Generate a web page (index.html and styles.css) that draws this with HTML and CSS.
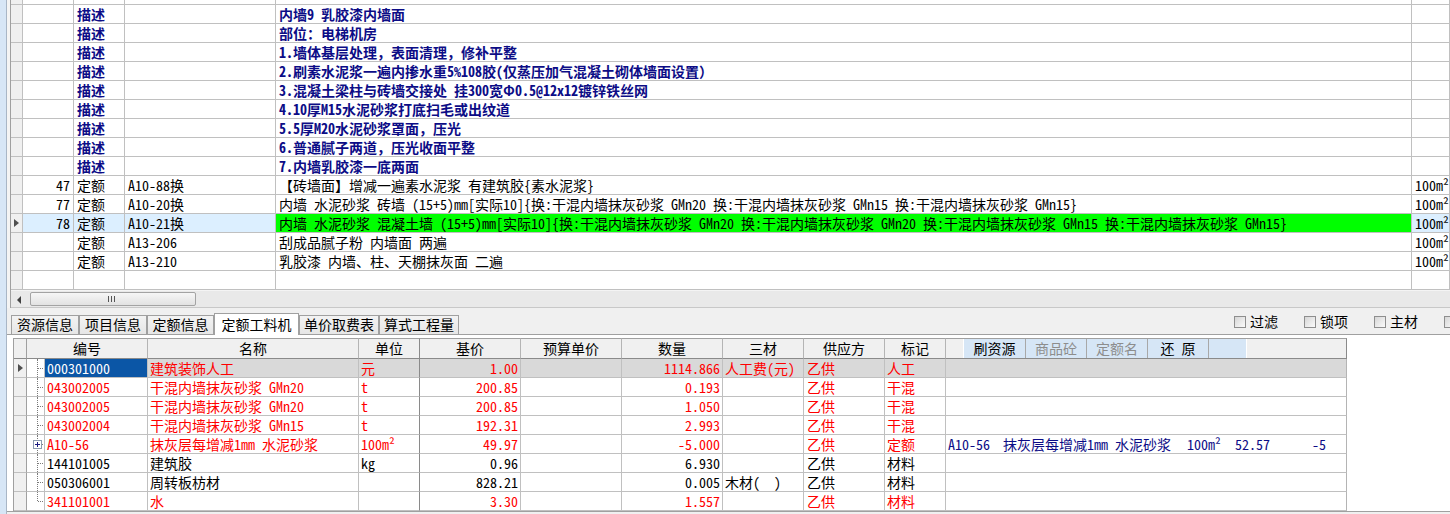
FILE: index.html
```html
<!DOCTYPE html>
<html lang="zh-CN">
<head>
<meta charset="utf-8">
<title>定额工料机</title>
<link rel="stylesheet" href="styles.css">
</head>
<body>
<div class="app">
  <div class="edge"></div>
  <div class="main">
    <section class="top">
      <div class="tframe">
        <div class="tgrid">
          <div class="trow stub"><div class="rh"></div><div></div><div></div><div></div><div></div><div></div></div>
          <div class="trow desc"><div class="rh"></div><div></div><div>描述</div><div></div><div>内墙9 乳胶漆内墙面</div><div></div></div>
          <div class="trow desc"><div class="rh"></div><div></div><div>描述</div><div></div><div>部位：电梯机房</div><div></div></div>
          <div class="trow desc"><div class="rh"></div><div></div><div>描述</div><div></div><div>1.墙体基层处理，表面清理，修补平整</div><div></div></div>
          <div class="trow desc"><div class="rh"></div><div></div><div>描述</div><div></div><div>2.刷素水泥浆一遍内掺水重5%108胶(仅蒸压加气混凝土砌体墙面设置）</div><div></div></div>
          <div class="trow desc"><div class="rh"></div><div></div><div>描述</div><div></div><div>3.混凝土梁柱与砖墙交接处 挂300宽Φ0.5@12x12镀锌铁丝网</div><div></div></div>
          <div class="trow desc"><div class="rh"></div><div></div><div>描述</div><div></div><div>4.10厚M15水泥砂浆打底扫毛或出纹道</div><div></div></div>
          <div class="trow desc"><div class="rh"></div><div></div><div>描述</div><div></div><div>5.5厚M20水泥砂浆罩面，压光</div><div></div></div>
          <div class="trow desc"><div class="rh"></div><div></div><div>描述</div><div></div><div>6.普通腻子两道，压光收面平整</div><div></div></div>
          <div class="trow desc"><div class="rh"></div><div></div><div>描述</div><div></div><div>7.内墙乳胶漆一底两面</div><div></div></div>
          <div class="trow"><div class="rh"></div><div class="num">47</div><div>定额</div><div>A10-88换</div><div>【砖墙面】增减一遍素水泥浆 有建筑胶{素水泥浆}</div><div>100m²</div></div>
          <div class="trow"><div class="rh"></div><div class="num">77</div><div>定额</div><div>A10-20换</div><div>内墙 水泥砂浆 砖墙 (15+5)mm[实际10]{换:干混内墙抹灰砂浆 GMn20 换:干混内墙抹灰砂浆 GMn15 换:干混内墙抹灰砂浆 GMn15}</div><div>100m²</div></div>
          <div class="trow cur"><div class="rh"><span class="tri"></span></div><div class="num">78</div><div>定额</div><div>A10-21换</div><div class="green">内墙 水泥砂浆 混凝土墙 (15+5)mm[实际10]{换:干混内墙抹灰砂浆 GMn20 换:干混内墙抹灰砂浆 GMn20 换:干混内墙抹灰砂浆 GMn15 换:干混内墙抹灰砂浆 GMn15}</div><div>100m²</div></div>
          <div class="trow"><div class="rh"></div><div class="num"></div><div>定额</div><div>A13-206</div><div>刮成品腻子粉 内墙面 两遍</div><div>100m²</div></div>
          <div class="trow"><div class="rh"></div><div class="num"></div><div>定额</div><div>A13-210</div><div>乳胶漆 内墙、柱、天棚抹灰面 二遍</div><div>100m²</div></div>
          <div class="trow"><div class="rh"></div><div></div><div></div><div></div><div></div><div></div></div>
        </div>
        <div class="hscroll">
          <span class="arrow-l"></span>
          <span class="thumb"><span class="grip"></span></span>
        </div>
      </div>
    </section>

    <section class="bottom">
      <div class="tabbar">
        <div class="tabs">
          <div class="tab">资源信息</div>
          <div class="tab">项目信息</div>
          <div class="tab">定额信息</div>
          <div class="tab active">定额工料机</div>
          <div class="tab">单价取费表</div>
          <div class="tab">算式工程量</div>
        </div>
        <div class="checks">
          <label class="chk"><span class="box"></span>过滤</label>
          <label class="chk"><span class="box"></span>锁项</label>
          <label class="chk"><span class="box"></span>主材</label>
          <label class="chk"><span class="box"></span></label>
        </div>
      </div>

      <div class="bwrap">
        <div class="bgrid">
          <div class="brow head">
            <div class="rh"></div>
            <div class="code-h">编号</div>
            <div>名称</div>
            <div class="dark">单位</div>
            <div>基价</div>
            <div>预算单价</div>
            <div>数量</div>
            <div>三材</div>
            <div>供应方</div>
            <div>标记</div>
            <div class="panel">
              <div class="toolbar">
                <span class="tb">刷资源</span><span class="tb dis">商品砼</span><span class="tb dis">定额名</span><span class="tb">还 原</span><span class="tb last"></span>
              </div>
            </div>
            <div class="rest"></div>
          </div>

          <div class="brow sel red">
            <div class="rh"><span class="tri"></span></div>
            <div class="tree"></div>
            <div class="code selcell">000301000</div>
            <div>建筑装饰人工</div>
            <div class="dark">元</div>
            <div class="r">1.00</div>
            <div></div>
            <div class="r">1114.866</div>
            <div>人工费(元)</div>
            <div class="sp">乙供</div>
            <div>人工</div>
            <div class="panel"></div>
            <div class="rest"></div>
          </div>

          <div class="brow red">
            <div class="rh"></div>
            <div class="tree"></div>
            <div class="code">043002005</div>
            <div>干混内墙抹灰砂浆 GMn20</div>
            <div class="dark">t</div>
            <div class="r">200.85</div>
            <div></div>
            <div class="r">0.193</div>
            <div></div>
            <div class="sp">乙供</div>
            <div>干混</div>
            <div class="panel"></div>
            <div class="rest"></div>
          </div>

          <div class="brow red">
            <div class="rh"></div>
            <div class="tree"></div>
            <div class="code">043002005</div>
            <div>干混内墙抹灰砂浆 GMn20</div>
            <div class="dark">t</div>
            <div class="r">200.85</div>
            <div></div>
            <div class="r">1.050</div>
            <div></div>
            <div class="sp">乙供</div>
            <div>干混</div>
            <div class="panel"></div>
            <div class="rest"></div>
          </div>

          <div class="brow red">
            <div class="rh"></div>
            <div class="tree"></div>
            <div class="code">043002004</div>
            <div>干混内墙抹灰砂浆 GMn15</div>
            <div class="dark">t</div>
            <div class="r">192.31</div>
            <div></div>
            <div class="r">2.993</div>
            <div></div>
            <div class="sp">乙供</div>
            <div>干混</div>
            <div class="panel"></div>
            <div class="rest"></div>
          </div>

          <div class="brow red">
            <div class="rh"></div>
            <div class="tree"><svg class="plus" width="9" height="9" viewBox="0 0 9 9"><rect x="0.5" y="0.5" width="8" height="8" fill="#fff" stroke="#8c9cb0"/><path d="M2 4.5h5M4.5 2v5" stroke="#1a1a80"/></svg></div>
            <div class="code">A10-56</div>
            <div>抹灰层每增减1mm 水泥砂浆</div>
            <div class="dark">100m²</div>
            <div class="r">49.97</div>
            <div></div>
            <div class="r">-5.000</div>
            <div></div>
            <div class="sp">乙供</div>
            <div>定额</div>
            <div class="panel info"><span class="p-code">A10-56</span><span class="p-name">抹灰层每增减1mm 水泥砂浆</span><span class="p-unit">100m²</span><span class="p-price">52.57</span><span class="p-qty">-5</span></div>
            <div class="rest"></div>
          </div>

          <div class="brow">
            <div class="rh"></div>
            <div class="tree"></div>
            <div class="code">144101005</div>
            <div>建筑胶</div>
            <div class="dark">kg</div>
            <div class="r">0.96</div>
            <div></div>
            <div class="r">6.930</div>
            <div></div>
            <div class="sp">乙供</div>
            <div>材料</div>
            <div class="panel"></div>
            <div class="rest"></div>
          </div>

          <div class="brow">
            <div class="rh"></div>
            <div class="tree"></div>
            <div class="code">050306001</div>
            <div>周转板枋材</div>
            <div class="dark"></div>
            <div class="r">828.21</div>
            <div></div>
            <div class="r">0.005</div>
            <div>木材(&nbsp;&nbsp;)</div>
            <div class="sp">乙供</div>
            <div>材料</div>
            <div class="panel"></div>
            <div class="rest"></div>
          </div>

          <div class="brow red">
            <div class="rh"></div>
            <div class="tree last"></div>
            <div class="code">341101001</div>
            <div>水</div>
            <div class="dark"></div>
            <div class="r">3.30</div>
            <div></div>
            <div class="r">1.557</div>
            <div></div>
            <div class="sp">乙供</div>
            <div>材料</div>
            <div class="panel"></div>
            <div class="rest"></div>
          </div>
        </div>
        <div class="bline"></div>
      </div>
    </section>
  </div>
</div>
</body>
</html>
```

FILE: styles.css
```css
* { box-sizing: border-box; margin: 0; padding: 0; }
html, body { width: 1450px; height: 514px; overflow: hidden; background: #fff; }
body {
  font-family: "Noto Sans Mono CJK SC", "Noto Sans CJK SC", "Liberation Mono", monospace;
  font-size: 14px;
  color: #000;
}

.app { display: flex; height: 514px; }
.edge { width: 7px; flex: none; background: #d7e6f6; border-right: 1px solid #a9b6c6; }
.main { flex: 1; min-width: 0; display: flex; flex-direction: column; background: #f0f0f0; }

/* ---------- top grid ---------- */
.top { padding-left: 3px; background: #f4f4f4; }
.tframe { border-left: 1px solid #a0a0a0; }
.tgrid { background: #fff; }
.trow {
  display: grid;
  grid-template-columns: 12px 51px 51px 151px 1136px 1fr;
  height: 19px;
}
.trow.stub { height: 5px; }
.trow > div {
  border-right: 1px solid #c0c0c0;
  border-bottom: 1px solid #c0c0c0;
  line-height: 18px;
  white-space: nowrap;
  overflow: hidden;
  padding: 0 3px;
}
.trow > .rh { background: #f0f0f0; padding: 0; position: relative; }
.trow > .num { text-align: right; }
.trow.desc > div { color: #0c0c86; font-weight: bold; }
.trow.cur > div { background: #dcefff; }
.trow.cur > .rh { background: #f0f0f0; }
.trow.cur > .green { background: #00ff00; }

.tri {
  position: absolute;
  left: 3px;
  top: 5px;
  width: 0; height: 0;
  border-left: 5px solid #505050;
  border-top: 4px solid transparent;
  border-bottom: 4px solid transparent;
}

.hscroll {
  position: relative;
  height: 18px;
  background: #e9e9e9;
  border-top: 1px solid #f4f4f4;
  border-bottom: 1px solid #c8c8c8;
}
.arrow-l {
  position: absolute;
  left: 6px; top: 5px;
  width: 0; height: 0;
  border-right: 4px solid #404040;
  border-top: 4px solid transparent;
  border-bottom: 4px solid transparent;
}
.thumb {
  position: absolute;
  left: 19px; top: 1px;
  width: 166px; height: 14px;
  border: 1px solid #a3a3a3;
  border-radius: 2px;
  background: linear-gradient(#f6f6f6, #e2e2e2);
}
.grip {
  position: absolute;
  left: 77px; top: 3px;
  width: 7px; height: 6px;
  border-left: 1px solid #555;
  border-right: 1px solid #555;
}
.grip::after {
  content: "";
  position: absolute;
  left: 2px; top: 0;
  width: 1px; height: 6px;
  background: #555;
}

/* ---------- tabs ---------- */
.tabbar {
  display: flex;
  height: 27px;
  border-bottom: 1px solid #a0a0a0;
  padding-left: 4px;
  background: #f0f0f0;
}
.tabs { display: flex; align-items: flex-end; flex: none; }
.tab {
  height: 19px;
  border: 1px solid #a0a0a0;
  border-bottom: none;
  background: linear-gradient(#f3f3f3, #e6e6e6);
  line-height: 17px;
  text-align: center;
  white-space: nowrap;
  overflow: hidden;
}
.tab:nth-child(1) { width: 68px; }
.tab:nth-child(2) { width: 68px; }
.tab:nth-child(3) { width: 67px; }
.tab:nth-child(4) { width: 85px; }
.tab:nth-child(5) { width: 80px; }
.tab:nth-child(6) { width: 80px; }
.tab.active {
  height: 22px;
  margin-bottom: -1px;
  background: #fff;
  line-height: 20px;
  position: relative;
}

.checks {
  display: flex;
  gap: 26px;
  margin-left: 775px;
  padding-top: 7px;
  flex: none;
}
.chk { display: flex; align-items: center; height: 13px; white-space: nowrap; line-height: 13px; }
.box {
  width: 12px; height: 12px;
  border: 1px solid #8e8e8e;
  background: linear-gradient(135deg, #d6d6d6, #fbfbfb);
  margin-right: 4px;
  flex: none;
}

/* ---------- bottom grid ---------- */
.bwrap { background: #fff; padding: 3px 0 0 6px; flex: 1; }
.bgrid { border-left: 1px solid #a0a0a0; }
.brow {
  display: grid;
  grid-template-columns: 13px 18px 103px 211px 61px 101px 101px 101px 81px 81px 61px 401px 1fr;
  height: 19px;
}
.brow > div {
  border-right: 1px solid #c0c0c0;
  border-bottom: 1px solid #c0c0c0;
  line-height: 18px;
  white-space: nowrap;
  overflow: hidden;
  padding: 0 2px;
}
.brow > .rh { background: #f0f0f0; border-right-color: #a0a0a0; padding: 0; position: relative; }
.brow > .rh .tri { left: 4px; }
.brow > .dark { border-right-color: #8a8a8a; }
.brow > .r { text-align: right; }
.brow > .sp { padding-left: 3px; }
.brow > .rest { border: none; background: #fff; }

.brow.head { height: 21px; }
.brow.head > div {
  background: #f0f0f0;
  border-top: 1px solid #a0a0a0;
  border-bottom: 1px solid #8a8a8a;
  border-right-color: #b4b4b4;
  text-align: center;
  line-height: 18px;
}
.brow.head > .rh { border-right-color: #a0a0a0; }
.brow.head > .code-h { grid-column: span 2; }
.brow.head > .dark { border-right-color: #8a8a8a; }
.brow.head > .panel { padding: 0 0 0 17px; border-right-color: #8a8a8a; text-align: left; }
.brow.head > .rest { background: #fff; border: none; }

.toolbar {
  display: flex;
  height: 19px;
  width: 283px;
  background: #d6e6f6;
  border-left: 1px solid #fff;
}
.tb {
  width: 61px;
  flex: none;
  text-align: center;
  border-right: 1px solid #a8a8a8;
  line-height: 18px;
  color: #000;
}
.tb:first-child { width: 62px; }
.tb.dis { color: #8d8d8d; }
.tb.last { width: 38px; border-right: 1px solid #fff; }

.brow.red > div { color: #ff0000; }
.brow.sel > div { background: #d9d9d9; }
.brow.sel > .rh { background: #f0f0f0; }
.brow.sel > .rest { background: #fff; }
.brow > .tree { background: #fff; position: relative; padding: 0; }
.brow.sel > .tree { background: #fff; }
.brow > .code { padding-left: 2px; }
.brow.sel > .selcell { background: #0b56a6; color: #fff; }
.brow > .panel { border-right-color: #b4b4b4; }
.brow > .panel.info { color: #0c0c86; padding-left: 2px; }

.tree::before {
  content: "";
  position: absolute;
  left: 10px; top: 0; bottom: 0;
  border-left: 1px dotted #7a7a7a;
}
.tree::after {
  content: "";
  position: absolute;
  left: 11px; top: 9px;
  width: 7px;
  border-top: 1px dotted #7a7a7a;
}
.tree.last::before { bottom: 9px; }
.plus { position: absolute; left: 6px; top: 5px; z-index: 1; }

.p-code { display: inline-block; width: 55px; }
.p-name { display: inline-block; width: 184px; }
.p-unit { display: inline-block; width: 48px; }
.p-price { display: inline-block; width: 77px; }
.p-qty { display: inline-block; }

.bline { height: 1px; background: #a0a0a0; margin-left: -6px; }
```
